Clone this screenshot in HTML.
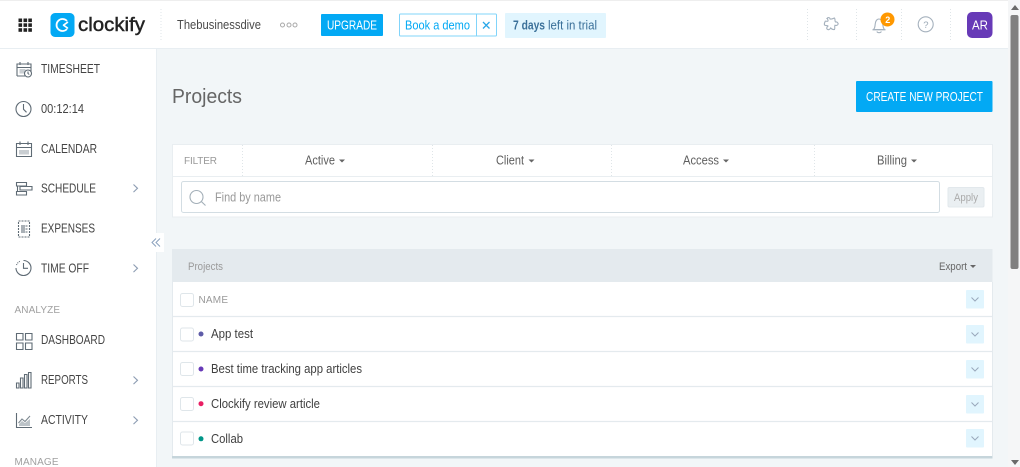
<!DOCTYPE html>
<html lang="en"><head><meta charset="utf-8"><title>Projects - Clockify</title>
<style>
html,body{margin:0;padding:0;width:1020px;height:467px;overflow:hidden;background:#f2f6f8}
svg{display:block}
text{font-family:"Liberation Sans",sans-serif;font-size:12px;fill:#444}
.n{font-size:12.5px;fill:#444}
.g{fill:#9a9a9a;font-size:10px}
.r{font-size:13px;fill:#3f3f3f}
.f{font-size:12.5px;fill:#5f5f5f}
.i{fill:none;stroke:#5f6b75;stroke-width:1.1}
.d{stroke:#dfe5e8;stroke-width:1;stroke-dasharray:1 2;fill:none}
.c{fill:none;stroke:#8c9cb2;stroke-width:1.1}
.l{stroke:#e4eaee;stroke-width:1.2}
.cb{fill:#fff;stroke:#dfe6ea;stroke-width:1}
.ch{fill:#e1f5fe}
.cv{fill:none;stroke:#9aa8bc;stroke-width:1}
</style></head><body>
<svg width="1020" height="467" viewBox="0 0 1020 467" xmlns="http://www.w3.org/2000/svg">
<rect width="1020" height="467" fill="#f2f6f8"/>
<!-- top bar -->
<rect x="0" y="1" width="1010" height="47" fill="#fff"/>
<rect x="0" y="0" width="1020" height="1" fill="#eeeeee"/>
<rect x="0" y="48" width="1010" height="1" fill="#e8eef2"/>
<!-- sidebar -->
<rect x="0" y="49" width="156" height="418" fill="#fff"/>
<rect x="156" y="49" width="1" height="418" fill="#e8eef2"/>
<!-- grid icon -->
<g fill="#222">
<rect x="18.5" y="18.5" width="3.6" height="3.6"/><rect x="23.5" y="18.5" width="3.6" height="3.6"/><rect x="28.3" y="18.5" width="3.6" height="3.6"/>
<rect x="18.5" y="23.3" width="3.6" height="3.6"/><rect x="23.5" y="23.3" width="3.6" height="3.6"/><rect x="28.3" y="23.3" width="3.6" height="3.6"/>
<rect x="18.5" y="28.2" width="3.6" height="3.6"/><rect x="23.5" y="28.2" width="3.6" height="3.6"/><rect x="28.3" y="28.2" width="3.6" height="3.6"/>
</g>
<!-- logo -->
<rect x="50.5" y="13" width="24" height="24" rx="4.5" fill="#03a9f4"/>
<path d="M66.5 20.5a6 6 0 1 0 0 9" fill="none" stroke="#fff" stroke-width="1.8" stroke-linecap="round"/>
<path d="M67.5 22.3L63.5 25.2L67.5 28" fill="none" stroke="#fff" stroke-width="1.6" stroke-linecap="round" stroke-linejoin="round"/>
<text x="78" y="31" textLength="67" lengthAdjust="spacingAndGlyphs" style="font-size:19.5px;fill:#222;stroke:#222;stroke-width:.45">clockify</text>
<path class="d" d="M161 9V41"/>
<text x="177" y="29" textLength="84" lengthAdjust="spacingAndGlyphs" style="font-size:13px;fill:#4a4a4a">Thebusinessdive</text>
<g fill="none" stroke="#a8a8a8" stroke-width="1"><circle cx="282.5" cy="25" r="2"/><circle cx="289" cy="25" r="2"/><circle cx="295" cy="25" r="2"/></g>
<rect x="321" y="14" width="62" height="22" rx="1" fill="#03a9f4"/>
<text x="327" y="29.500" textLength="50" lengthAdjust="spacingAndGlyphs" style="font-size:13px;fill:#fff">UPGRADE</text>
<rect x="399.5" y="14" width="97" height="22" rx="1" fill="#fff" stroke="#81d4fa"/>
<path d="M476.5 14V36" stroke="#81d4fa"/>
<text x="405" y="29.500" textLength="65" lengthAdjust="spacingAndGlyphs" style="font-size:13px;fill:#03a9f4">Book a demo</text>
<path d="M483 22L489.5 28.5M489.5 22L483 28.5" stroke="#2aa7e8" stroke-width="1.3" fill="none"/>
<rect x="505" y="13" width="101" height="25" rx="1" fill="#e1f5fe"/>
<text x="513" y="29.500" textLength="32" lengthAdjust="spacingAndGlyphs" style="font-size:12.500px;font-weight:700;fill:#3a7099">7 days</text>
<text x="548" y="29.500" textLength="49" lengthAdjust="spacingAndGlyphs" style="font-size:12.500px;fill:#3a7099">left in trial</text>
<!-- right icons -->
<path class="d" d="M807.5 9V41M856.5 9V41M901.5 9V41M950.5 9V41"/>
<path d="M827 18.500c1-1.500 3-1 3 .5c1.500.5 3-.5 4.500-1c1 1.500 0 3 1 4c1.500-.5 3 1 2.500 2.300c-.5 1.200-2 1.400-3 .9c-.8 1 .3 2.800-.5 4.300c-1.500.3-2.800-.3-3.800-1.500c-.8 1.600-2.700 2.200-3.700 1c-.8-1 .2-2.200 1-3c-1-.8-2.500 0-3.500-1c-.6-1.500.3-2.700.8-3.800c1.200-.1 2.200.4 2.700-.2c.4-.9-.7-1.700-.5-2.500z" fill="none" stroke="#a5b1bd" stroke-width="1.1"/>
<path d="M873.500 29.500c1.500-1.500 1.500-3 1.700-5.500c.2-3 1.800-5 3.800-5s3.600 2 3.800 5c.2 2.500.2 4 1.700 5.500z" fill="none" stroke="#a5b1bd" stroke-width="1.1"/>
<path d="M872.500 29.800H885.500M876.800 31.500a2.500 2 0 0 0 4.600 0" fill="none" stroke="#a5b1bd" stroke-width="1.1"/>
<circle cx="887.5" cy="19.5" r="7" fill="#ff9800"/>
<text x="885.3" y="22.8" style="font-size:9px;font-weight:700;fill:#fff">2</text>
<circle cx="925.7" cy="24.3" r="7.5" fill="none" stroke="#a5b1bd" stroke-width="1.1"/>
<text x="923.3" y="27.8" style="font-size:9.5px;fill:#9aa8b5">?</text>
<rect x="967" y="12" width="25.5" height="26" rx="5" fill="#673ab7"/>
<text x="972" y="29.5" textLength="16" lengthAdjust="spacingAndGlyphs" style="font-size:12.5px;fill:#fff">AR</text>
<!-- sidebar nav icons -->
<g class="i">
<path d="M17 76V64h14v8.5M17 67.5H31M20 62v3M28 62v3M17 76H25"/>
<rect x="19.5" y="69" width="6" height="4.500" fill="#c9ced2" stroke="none"/>
<circle cx="28" cy="73.5" r="3.5" fill="#fff"/>
<path d="M28 71.5v2l1.3 1"/>
<circle cx="23.5" cy="109" r="7.5"/>
<path d="M23.5 104v5.300l3 3"/>
<path d="M16.5 143.5H31.5V156.5H16.5ZM16.5 147.5H31.5M20 141.5v3.5M28 141.5v3.5"/>
<rect x="19" y="150" width="10" height="4.5" fill="#c9ced2" stroke="none"/>
<path d="M16.5 182.5H26.5V186H16.5ZM20 186.500H32V190H20ZM16.5 191.5H26.5V195H16.5ZM17.5 186V191.5"/>
<path d="M18.5 221h11v16h-11z" stroke-dasharray="2 1"/>
<rect x="21" y="225" width="4" height="8" fill="#a9b0b6" stroke="none"/>
<path d="M25.5 226h2M25.5 229h2M25.5 232h2"/>
<path d="M23.5 260.5a7.5 7.5 0 1 1 -7.5 7.5M23.5 263v5.3h4.5"/>
<path d="M16.5 265a7.5 7.5 0 0 1 4-4" stroke-dasharray="1 1"/>
<path d="M16.5 333.5H23V340H16.5ZM25.5 333.5H32V340H25.5ZM16.5 343H23V349.5H16.5ZM25.5 343H32V349.5H25.5Z"/>
<path d="M16.5 383h2.500v5h-2.500zM20.5 378h2.500v10h-2.500zM24.5 374.5h2.500v13.500h-2.500zM28.5 372.5h2.500v15.500h-2.500z"/>
<path d="M16.5 413V427.5H32"/>
<path d="M18.5 423l3.500-4l3 2.500l5-5.500" stroke="#7d8890"/>
<path d="M19 426v-2l3-3l3 2l5-4v7z" fill="#bcc3c8" stroke="none"/>
</g>
<!-- sidebar text -->
<text class="n" x="41" y="73" textLength="59" lengthAdjust="spacingAndGlyphs">TIMESHEET</text>
<text class="n" x="41" y="113" textLength="43" lengthAdjust="spacingAndGlyphs">00:12:14</text>
<text class="n" x="41" y="153" textLength="56" lengthAdjust="spacingAndGlyphs">CALENDAR</text>
<text class="n" x="41" y="192.500" textLength="55" lengthAdjust="spacingAndGlyphs">SCHEDULE</text>
<text class="n" x="41" y="232.500" textLength="54" lengthAdjust="spacingAndGlyphs">EXPENSES</text>
<text class="n" x="41" y="272.500" textLength="48" lengthAdjust="spacingAndGlyphs">TIME OFF</text>
<text class="g" x="14.5" y="313" textLength="45.5" style="fill:#a0a0a0">ANALYZE</text>
<text class="n" x="41" y="344" textLength="64" lengthAdjust="spacingAndGlyphs">DASHBOARD</text>
<text class="n" x="41" y="384" textLength="47" lengthAdjust="spacingAndGlyphs">REPORTS</text>
<text class="n" x="41" y="424" textLength="47" lengthAdjust="spacingAndGlyphs">ACTIVITY</text>
<text class="g" x="14.5" y="465" textLength="44" style="fill:#a0a0a0">MANAGE</text>
<path class="c" d="M133.500 184.500l4 3.800l-4 3.800M133.500 264.500l4 3.800l-4 3.800M133.500 376.500l4 3.800l-4 3.800M133.500 416.500l4 3.800l-4 3.800"/>
<!-- collapse -->
<rect x="148" y="233" width="16" height="19" fill="#fff"/>
<path d="M156 238.500l-4 4l4 4M160 238.500l-4 4l4 4" fill="none" stroke="#8aa0bd" stroke-width="1"/>
<!-- header -->
<text x="172" y="103" textLength="70" lengthAdjust="spacingAndGlyphs" style="font-size:20.500px;fill:#666">Projects</text>
<rect x="856" y="81" width="136.5" height="31" rx="1" fill="#03a9f4"/>
<text x="866" y="101" textLength="117" lengthAdjust="spacingAndGlyphs" style="font-size:12.500px;fill:#fff">CREATE NEW PROJECT</text>
<!-- filter -->
<rect x="172.5" y="144.5" width="820" height="72.5" fill="#fff" stroke="#e9eef1"/>
<path d="M173 176.500H992" stroke="#e9eef1"/>
<path class="d" d="M242.5 145V176M432.5 145V176M611.5 145V176M814.5 145V176"/>
<text class="g" x="184" y="164" textLength="33" style="fill:#999">FILTER</text>
<text class="f" x="305" y="164.500" textLength="30" lengthAdjust="spacingAndGlyphs">Active</text>
<text class="f" x="496" y="164.500" textLength="28" lengthAdjust="spacingAndGlyphs">Client</text>
<text class="f" x="683" y="164.500" textLength="36" lengthAdjust="spacingAndGlyphs">Access</text>
<text class="f" x="877" y="164.500" textLength="30" lengthAdjust="spacingAndGlyphs">Billing</text>
<path d="M339 159.500h6l-3 3zM528.500 159.500h6l-3 3zM723 159.500h6l-3 3zM911 159.500h6l-3 3z" fill="#666"/>
<rect x="181.5" y="181.5" width="758" height="31" rx="2" fill="#fff" stroke="#d3dde3"/>
<circle cx="196.5" cy="197" r="6.5" fill="none" stroke="#a3afb8" stroke-width="1.1"/>
<path d="M201.300 201.500L205.500 205.500" stroke="#a3afb8" stroke-width="1.1"/>
<text x="215" y="201.500" textLength="66" lengthAdjust="spacingAndGlyphs" style="font-size:12.500px;fill:#999">Find by name</text>
<rect x="948" y="187.500" width="36" height="19.500" rx="1.500" fill="#eaeff2" stroke="#e2e8ec"/>
<text x="954" y="201" textLength="24" lengthAdjust="spacingAndGlyphs" style="font-size:11px;fill:#aaa">Apply</text>
<!-- table -->
<rect x="172" y="249" width="820.5" height="33" fill="#e4eaee"/>
<text x="188" y="270" textLength="35" lengthAdjust="spacingAndGlyphs" style="font-size:11px;fill:#9a9a9a">Projects</text>
<text x="939" y="270" textLength="28" lengthAdjust="spacingAndGlyphs" style="font-size:11px;fill:#666">Export</text>
<path d="M970 265h6l-3 3z" fill="#666"/>
<rect x="172" y="282" width="820.5" height="174" fill="#fff"/>
<rect x="172" y="282" width="1" height="174" fill="#e4eaee"/>
<rect x="992" y="282" width="1" height="174" fill="#e4eaee"/>
<path class="l" d="M172 316.500H992M172 351.500H992M172 386.500H992M172 421.500H992"/>
<rect x="172" y="456" width="820.5" height="2.5" fill="#c6d5db"/>
<rect class="cb" x="180.5" y="293.5" width="13" height="13" rx="2"/>
<rect class="cb" x="180.5" y="328" width="13" height="13" rx="2"/>
<rect class="cb" x="180.5" y="362.5" width="13" height="13" rx="2"/>
<rect class="cb" x="180.5" y="397.5" width="13" height="13" rx="2"/>
<rect class="cb" x="180.5" y="432" width="13" height="13" rx="2"/>
<text class="g" x="198.5" y="303" textLength="29.5" style="fill:#999">NAME</text>
<circle cx="201" cy="334" r="2.5" fill="#5e5ca8"/>
<circle cx="201" cy="369" r="2.5" fill="#673ab7"/>
<circle cx="201" cy="403.7" r="2.5" fill="#e91e63"/>
<circle cx="201" cy="438.8" r="2.5" fill="#009688"/>
<text class="r" x="211" y="338" textLength="42" lengthAdjust="spacingAndGlyphs">App test</text>
<text class="r" x="211" y="373" textLength="151" lengthAdjust="spacingAndGlyphs">Best time tracking app articles</text>
<text class="r" x="211" y="408" textLength="109" lengthAdjust="spacingAndGlyphs">Clockify review article</text>
<text class="r" x="211" y="443" textLength="32" lengthAdjust="spacingAndGlyphs">Collab</text>
<rect class="ch" x="966" y="290" width="18" height="18.5" rx="1"/>
<rect class="ch" x="966" y="325" width="18" height="18.5" rx="1"/>
<rect class="ch" x="966" y="360" width="18" height="18.5" rx="1"/>
<rect class="ch" x="966" y="395" width="18" height="18.5" rx="1"/>
<rect class="ch" x="966" y="429" width="18" height="18.5" rx="1"/>
<path class="cv" d="M971.500 297.500l3.500 3.500l3.500-3.500M971.500 332.500l3.500 3.500l3.500-3.500M971.500 367.500l3.500 3.500l3.500-3.500M971.500 402.500l3.500 3.500l3.500-3.500M971.500 436.500l3.500 3.500l3.500-3.500"/>
<!-- scrollbar -->
<rect x="1008" y="0" width="12" height="467" fill="#f5f6f7"/>
<path d="M1011 10h8l-4-5zM1011 460h8l-4 5z" fill="#6a6a6a"/>
<rect x="1010.5" y="15" width="8" height="254" rx="2" fill="#808080"/>
</svg>
</body></html>
